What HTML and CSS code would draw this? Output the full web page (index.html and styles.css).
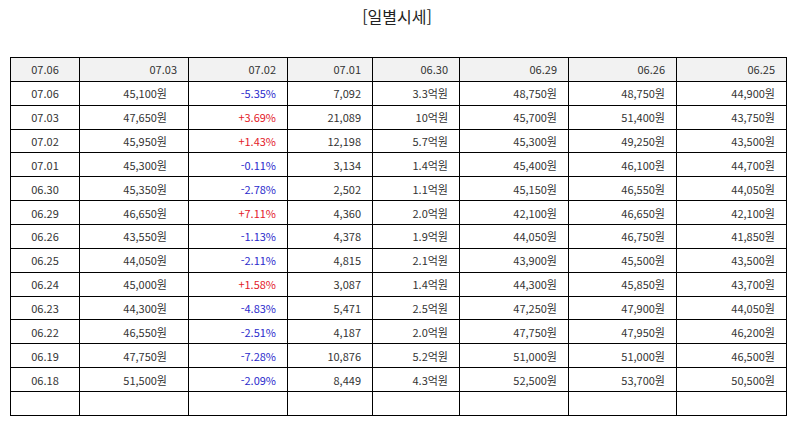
FILE: index.html
```html
<!DOCTYPE html>
<html lang="ko">
<head>
<meta charset="utf-8">
<link rel="stylesheet" href="styles.css">
</head>
<body>
<div class="title">[일별시세]</div>
<table class="grid">
<colgroup>
<col style="width:69px"><col style="width:109px"><col style="width:99px"><col style="width:85px"><col style="width:87px"><col style="width:109px"><col style="width:108px"><col style="width:110px">
</colgroup>
<thead>
<tr><th class="c">07.06</th><th>07.03</th><th>07.02</th><th>07.01</th><th>06.30</th><th>06.29</th><th>06.26</th><th>06.25</th></tr>
</thead>
<tbody>
<tr><td class="c">07.06</td><td class="p">45,100원</td><td class="dn">-5.35%</td><td>7,092</td><td>3.3억원</td><td>48,750원</td><td>48,750원</td><td>44,900원</td></tr>
<tr><td class="c">07.03</td><td class="p">47,650원</td><td class="up">+3.69%</td><td>21,089</td><td>10억원</td><td>45,700원</td><td>51,400원</td><td>43,750원</td></tr>
<tr><td class="c">07.02</td><td class="p">45,950원</td><td class="up">+1.43%</td><td>12,198</td><td>5.7억원</td><td>45,300원</td><td>49,250원</td><td>43,500원</td></tr>
<tr><td class="c">07.01</td><td class="p">45,300원</td><td class="dn">-0.11%</td><td>3,134</td><td>1.4억원</td><td>45,400원</td><td>46,100원</td><td>44,700원</td></tr>
<tr><td class="c">06.30</td><td class="p">45,350원</td><td class="dn">-2.78%</td><td>2,502</td><td>1.1억원</td><td>45,150원</td><td>46,550원</td><td>44,050원</td></tr>
<tr><td class="c">06.29</td><td class="p">46,650원</td><td class="up">+7.11%</td><td>4,360</td><td>2.0억원</td><td>42,100원</td><td>46,650원</td><td>42,100원</td></tr>
<tr><td class="c">06.26</td><td class="p">43,550원</td><td class="dn">-1.13%</td><td>4,378</td><td>1.9억원</td><td>44,050원</td><td>46,750원</td><td>41,850원</td></tr>
<tr><td class="c">06.25</td><td class="p">44,050원</td><td class="dn">-2.11%</td><td>4,815</td><td>2.1억원</td><td>43,900원</td><td>45,500원</td><td>43,500원</td></tr>
<tr><td class="c">06.24</td><td class="p">45,000원</td><td class="up">+1.58%</td><td>3,087</td><td>1.4억원</td><td>44,300원</td><td>45,850원</td><td>43,700원</td></tr>
<tr><td class="c">06.23</td><td class="p">44,300원</td><td class="dn">-4.83%</td><td>5,471</td><td>2.5억원</td><td>47,250원</td><td>47,900원</td><td>44,050원</td></tr>
<tr><td class="c">06.22</td><td class="p">46,550원</td><td class="dn">-2.51%</td><td>4,187</td><td>2.0억원</td><td>47,750원</td><td>47,950원</td><td>46,200원</td></tr>
<tr><td class="c">06.19</td><td class="p">47,750원</td><td class="dn">-7.28%</td><td>10,876</td><td>5.2억원</td><td>51,000원</td><td>51,000원</td><td>46,500원</td></tr>
<tr><td class="c">06.18</td><td class="p">51,500원</td><td class="dn">-2.09%</td><td>8,449</td><td>4.3억원</td><td>52,500원</td><td>53,700원</td><td>50,500원</td></tr>
<tr><td class="c"></td><td class="p"></td><td></td><td></td><td></td><td></td><td></td><td></td></tr>
</tbody>
</table>
</body>
</html>
```

FILE: styles.css
```css
html, body {
  margin: 0;
  padding: 0;
  background: #ffffff;
}
body {
  font-family: "Noto Sans CJK KR", "Noto Sans", sans-serif;
  color: #333333;
}
.title {
  height: 57px;
  box-sizing: border-box;
  padding-top: 5px;
  text-align: center;
  font-size: 16px;
  line-height: 22px;
  color: #222222;
}
.grid {
  margin-left: 10px;
  border-collapse: collapse;
  table-layout: fixed;
  width: 776px;
  font-size: 11px;
}
.grid th, .grid td {
  border: 1px solid #000000;
  height: 22.87px;
  padding: 0 11px 0 4px;
  text-align: right;
  font-weight: normal;
  line-height: 14px;
  white-space: nowrap;
  overflow: hidden;
}
.grid th {
  background: #f2f2f2;
}
.grid .c {
  text-align: center;
  padding: 0;
}
.grid td.p {
  padding-right: 21px;
}
.grid .up {
  color: #e3202a;
}
.grid .dn {
  color: #2b2bcc;
}
```
